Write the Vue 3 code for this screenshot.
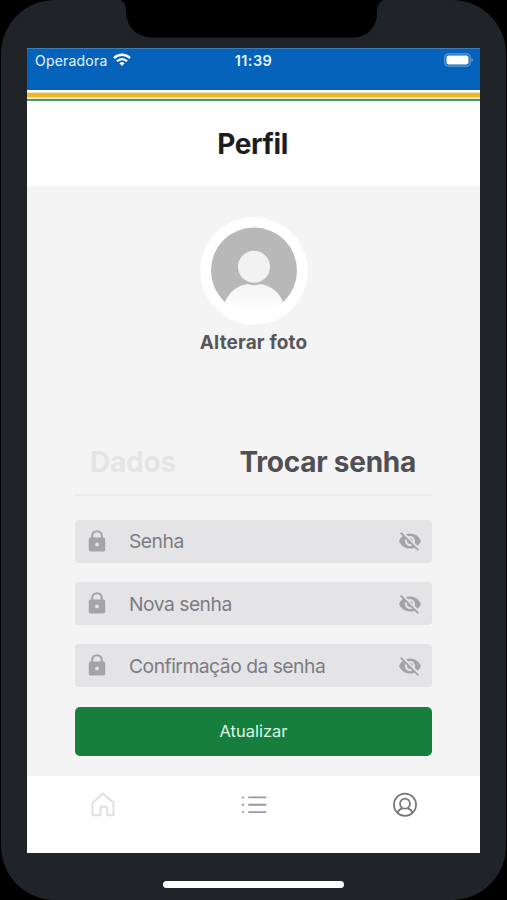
<script setup>
const fields = ['Senha', 'Nova senha', 'Confirmação da senha']
</script>

<template>
  <div class="stage">
    <div class="phone">
      <svg class="notch" width="266" height="38" viewBox="0 0 266 38">
        <path d="M0 0C4 1.500 6 5 6 10C6 27 16 37.500 34 37.500H232C247 37.500 257 28 257 12C257 6 259 2 264 0Z" fill="#000" />
      </svg>
      <div class="screen">
        <div class="status">
          <div class="carrier">
            <span class="operator">Operadora</span>
            <svg width="18" height="14" viewBox="0 0 18 14" fill="none" stroke="#fff" stroke-width="2.300">
              <path d="M1 5.100C5.500.600 12.500.600 17 5.100" />
              <path d="M4 8.200C6.900 5.300 11.100 5.300 14 8.200" />
              <path d="M6.400 10.200Q9 7.900 11.600 10.200L9 13Z" fill="#fff" stroke="none" />
            </svg>
          </div>
          <span class="clock">11:39</span>
          <svg class="battery" width="30" height="14" viewBox="0 0 30 14">
            <rect x=".8" y=".8" width="25.400" height="12.400" rx="3.800" fill="none" stroke="#6b9dd5" stroke-width="1.200" />
            <rect x="2.500" y="2.500" width="22" height="9" rx="2" fill="#fff" />
            <path d="M27.500 5v4q1.500-.6 1.500-2t-1.500-2" fill="#6b9dd5" />
          </svg>
        </div>
        <div class="stripes"></div>
        <header class="title"><h1>Perfil</h1></header>
        <main>
          <svg class="avatar" width="108" height="108" viewBox="0 0 108 108">
            <defs>
              <clipPath id="photo"><circle cx="54" cy="53.500" r="43" /></clipPath>
              <linearGradient id="torso" x1="0" y1="66" x2="0" y2="92" gradientUnits="userSpaceOnUse">
                <stop offset="0" stop-color="#f3f3f3" />
                <stop offset="1" stop-color="#fefefe" />
              </linearGradient>
            </defs>
            <circle cx="54" cy="54" r="53.700" fill="#fff" />
            <g clip-path="url(#photo)">
              <rect width="108" height="88" fill="#b8b8b8" />
              <path d="M22 94C26 76 37 66.500 54 66.500S82 76 86 94V108H22Z" fill="url(#torso)" />
              <circle cx="54" cy="49.700" r="18.500" fill="#b8b8b8" />
              <circle cx="54" cy="49.700" r="16" fill="#f2f2f2" />
            </g>
          </svg>
          <div class="change">Alterar foto</div>
          <nav class="tabs">
            <span class="tab">Dados</span>
            <span class="tab active">Trocar senha</span>
          </nav>
          <form>
            <div v-for="field in fields" :key="field" class="field">
              <svg class="lock" width="18" height="23" viewBox="0 0 18 23">
                <path d="M4.200 9V6a4.800 4.800 0 0 1 9.600 0v3" fill="none" stroke="#a4a4a6" stroke-width="2.100" />
                <path fill-rule="evenodd" d="M2.500 7.500h13a1.700 1.700 0 0 1 1.700 1.700v10.600a1.700 1.700 0 0 1-1.700 1.700h-13a1.700 1.700 0 0 1-1.700-1.700V9.200a1.700 1.700 0 0 1 1.700-1.700ZM9 12.500a1.900 1.900 0 1 0 0 3.800a1.900 1.900 0 0 0 0-3.800Z" fill="#a4a4a6" />
              </svg>
              <span class="placeholder">{{ field }}</span>
              <svg class="eye" width="24" height="24" viewBox="0 0 24 24" fill="#a4a4a6">
                <path d="M12 7c2.760 0 5 2.240 5 5 0 .65-.13 1.260-.36 1.830l2.920 2.920c1.510-1.260 2.700-2.890 3.430-4.750-1.730-4.390-6-7.500-11-7.500-1.400 0-2.740.25-3.980.7l2.160 2.160C10.740 7.130 11.350 7 12 7zM2 4.270l2.280 2.280.46.460C3.080 8.300 1.780 10.020 1 12c1.730 4.390 6 7.500 11 7.500 1.550 0 3.030-.3 4.380-.84l.42.420L19.730 22 21 20.730 3.270 3 2 4.270zM7.530 9.800l1.550 1.550c-.05.210-.08.430-.08.650 0 1.660 1.340 3 3 3 .22 0 .44-.03.65-.08l1.550 1.550c-.67.330-1.410.530-2.200.530-2.760 0-5-2.240-5-5 0-.79.200-1.530.530-2.200zm4.310-.78l3.150 3.150.02-.16c0-1.660-1.340-3-3-3l-.17.010z" />
              </svg>
            </div>
            <button type="button">Atualizar</button>
          </form>
        </main>
        <footer>
          <svg width="26" height="26" viewBox="0 0 26 26" fill="none" stroke="#dfdfdf" stroke-width="2" stroke-linejoin="round">
            <path d="M2.500 10.700L13 1.600l10.500 9.100V23.200h-6.300v-7q0-1.500-1.500-1.500h-3.800q-1.500 0-1.500 1.500v7H2.500Z" />
          </svg>
          <svg width="26" height="26" viewBox="0 0 26 26" fill="none" stroke="#9998ab" stroke-width="1.900" stroke-linecap="round">
            <path d="M8 5.400h16.500M8 12.800h16.500M8 20.100h16.500" />
            <path d="M1.700 5.400h.6M1.700 12.800h.6M1.700 20.100h.6" />
          </svg>
          <svg width="26" height="26" viewBox="0 0 26 26" fill="none" stroke="#777779" stroke-width="1.700">
            <circle cx="13" cy="12.800" r="11.100" />
            <circle cx="13" cy="11.700" r="5" />
            <path d="M5.300 20.800Q7.200 17.100 10.500 16.400M15.500 16.400Q18.800 17.100 20.700 20.800" />
          </svg>
        </footer>
      </div>
      <div class="home-bar"></div>
    </div>
  </div>
</template>

<style>
body {
  background: #000;
}
</style>

<style scoped>
.stage {
  width: 507px;
  height: 900px;
  background: #000;
  font-family: Inter, "Liberation Sans", sans-serif;
  overflow: hidden;
}
.phone {
  position: relative;
  box-sizing: border-box;
  height: 900px;
  margin: 0 1px;
  padding: 48px 26px 0;
  background: #202429;
  border-radius: 54px;
}
.notch {
  position: absolute;
  left: 119px;
  top: 0;
}
.screen {
  display: flex;
  flex-direction: column;
  height: 805px;
  background: #fff;
}
.status {
  display: grid;
  grid-template-columns: 1fr auto 1fr;
  align-items: start;
  box-sizing: border-box;
  height: 42px;
  padding: 4px 6px 0 8px;
  background: #0562bb;
  border-top: 1px solid #3d7cb7;
  color: #e9f5ff;
  font-size: 14px;
  line-height: 16px;
}
.carrier {
  display: flex;
  gap: 6px;
}
.operator {
  letter-spacing: 0.2px;
}
.clock {
  margin-right: 2px;
  font-weight: 600;
  font-size: 14.5px;
  letter-spacing: 0.45px;
}
.battery {
  justify-self: end;
}
.stripes {
  height: 11px;
  background: linear-gradient(#fff 0 2px, #f8e5b5 2px 3px, #eeb62b 3px 7px, #f2dc91 7px 8px, #e9edcf 8px 9px, #479b65 9px 11px);
}
.title {
  display: flex;
  justify-content: center;
  align-items: center;
  height: 85px;
}
h1 {
  margin: 0 2px 0 0;
  color: #1d1d1f;
  font-size: 28px;
  line-height: 34px;
  font-weight: 700;
  letter-spacing: -0.4px;
}
main {
  display: flex;
  flex-direction: column;
  align-items: center;
  box-sizing: border-box;
  height: 590px;
  padding: 31px 48px 0;
  background: #f4f4f4;
}
.change {
  margin-top: 6px;
  color: #57575a;
  font-size: 19px;
  line-height: 24px;
  font-weight: 700;
  letter-spacing: 0.15px;
}
.tabs {
  display: flex;
  justify-content: space-between;
  box-sizing: border-box;
  width: 357px;
  height: 54px;
  margin-top: 87px;
  padding: 3px 16px 0 15px;
  border-bottom: 2px solid #ebebec;
}
.tab {
  color: #e4e4e6;
  font-size: 28px;
  line-height: 34px;
  font-weight: 700;
  letter-spacing: -0.2px;
  white-space: nowrap;
}
.active {
  color: #505054;
  letter-spacing: -0.25px;
}
form {
  display: flex;
  flex-direction: column;
  gap: 19.5px;
  width: 357px;
  margin-top: 24px;
}
.field {
  display: flex;
  align-items: center;
  box-sizing: border-box;
  height: 42.7px;
  padding: 0 10px 0 13px;
  background: #e4e4e6;
  border-radius: 4px;
}
.placeholder {
  flex: 1;
  margin-left: 23px;
  color: #7c7c80;
  font-size: 19.3px;
  line-height: 24px;
  letter-spacing: -0.5px;
}
button {
  height: 49px;
  padding: 0;
  border: 0;
  border-radius: 5px;
  background: #167f3e;
  color: #dff8e4;
  font-family: inherit;
  font-size: 16.5px;
  line-height: 20px;
}
footer {
  display: flex;
  justify-content: space-between;
  align-items: flex-start;
  box-sizing: border-box;
  height: 77px;
  padding: 16px 62px 0 63px;
}
.home-bar {
  width: 181px;
  height: 7px;
  margin: 28px auto 0;
  background: #fff;
  border-radius: 4px;
}
</style>
